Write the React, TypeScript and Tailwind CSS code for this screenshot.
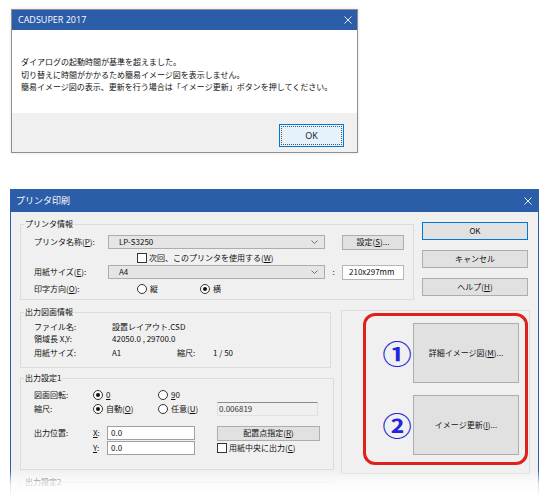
import React from "react";

const U = ({ children }: { children: React.ReactNode }) => (
  <span className="underline underline-offset-[1px]">{children}</span>
);

const Radio = ({ checked, children, className = "" }: { checked?: boolean; children: React.ReactNode; className?: string }) => (
  <span className={`flex items-center gap-[3px] ${className}`}>
    <span className="w-[10px] h-[10px] rounded-full border border-[#333] bg-white flex items-center justify-center shrink-0">
      {checked && <span className="w-[4px] h-[4px] rounded-full bg-[#111]" />}
    </span>
    <span>{children}</span>
  </span>
);

const Check = ({ children }: { children: React.ReactNode }) => (
  <span className="flex items-center gap-[2px]">
    <span className="w-[10px] h-[10px] border border-[#333] bg-white shrink-0" />
    <span>{children}</span>
  </span>
);

const Group = ({ label, className = "", children }: { label: string; className?: string; children?: React.ReactNode }) => (
  <div className={`relative border border-[#dcdcdc] ${className}`}>
    <span className="absolute -top-[7px] left-[3px] bg-[#f0f0f0] px-[1px] leading-[12px] text-[8px]">{label}</span>
    {children}
  </div>
);

const Chevron = () => (
  <svg width="7" height="4" viewBox="0 0 7 4" className="shrink-0">
    <path d="M0.5 0.5 L3.5 3.5 L6.5 0.5" fill="none" stroke="#666" strokeWidth="0.9" />
  </svg>
);

const Dropdown = ({ text }: { text: string }) => (
  <div className="w-[217px] h-[14px] bg-[#e5e5e5] border border-[#adadad] flex items-center justify-between pl-[10px] pr-[6px]">
    <span>{text}</span>
    <Chevron />
  </div>
);

const Btn = ({ children, className = "" }: { children: React.ReactNode; className?: string }) => (
  <div className={`bg-[#e1e1e1] border border-[#adadad] flex items-center justify-center ${className}`}>{children}</div>
);

const CloseX = ({ size = 8 }: { size?: number }) => (
  <svg width={size} height={size} viewBox="0 0 8 8">
    <path d="M0.5 0.5 L7.5 7.5 M7.5 0.5 L0.5 7.5" stroke="white" strokeWidth="0.9" />
  </svg>
);

export default function App() {
  return (
    <div className="w-[550px] h-[497px] bg-white relative overflow-hidden text-[#111] [font-family:'Noto_Sans_CJK_JP','Liberation_Sans',sans-serif] text-[8px] leading-[12px]">
      {/* Top message dialog */}
      <div className="ml-[11px] mt-[9px] w-[347px] h-[144px] border border-[#8f8f8f] flex flex-col shadow-[0_0_3px_rgba(0,0,0,0.12)]">
        <div className="h-[20px] bg-[#2c5da8] flex items-center justify-between pl-[6px] pr-[5px] text-white">
          <span className="text-[9px] [font-family:'Open_Sans','Liberation_Sans',sans-serif]">CADSUPER 2017</span>
          <CloseX />
        </div>
        <div className="h-[83px] bg-white pt-[26px] pl-[9px] text-[8px] leading-[12.5px]">
          <div>ダイアログの起動時間が基準を超えました。</div>
          <div>切り替えに時間がかかるため簡易イメージ図を表示しません。</div>
          <div>簡易イメージ図の表示、更新を行う場合は「イメージ更新」ボタンを押してください。</div>
        </div>
        <div className="flex-1 bg-[#f0f0f0] flex justify-end items-start pt-[11px] pr-[13px]">
          <div className="w-[65px] h-[23px] border border-[#0078d7] bg-[#e5f1fb] p-[1px]">
            <div className="w-full h-full border border-dotted border-[#555] flex items-center justify-center text-[9px] [font-family:'Open_Sans','Liberation_Sans',sans-serif]">
              OK
            </div>
          </div>
        </div>
      </div>

      {/* Print dialog */}
      <div className="ml-[10px] mt-[36px] w-[529px] h-[320px] border-x border-t border-[#2c5da8] flex flex-col">
        <div className="h-[22px] bg-[#2c5da8] flex items-center justify-between pl-[5px] pr-[6px] text-white shrink-0">
          <span className="text-[9px]">プリンタ印刷</span>
          <CloseX />
        </div>
        <div className="flex-1 bg-[#f0f0f0]">
          {/* Section A */}
          <div className="flex items-start">
            <Group label="プリンタ情報" className="ml-[9px] mt-[12px] w-[394px] h-[76px]">
              <div className="pl-[13px] pt-[10px]">
                <div className="flex items-center h-[14px]">
                  <span className="w-[74px]">プリンタ名称(<U>P</U>):</span>
                  <Dropdown text="LP-S3250" />
                  <Btn className="ml-[17px] w-[62px] h-[15px]">
                    設定(<U>S</U>)...
                  </Btn>
                </div>
                <div className="flex items-center h-[14px] mt-[2px] pl-[103px]">
                  <Check>次回、このプリンタを使用する(<U>W</U>)</Check>
                </div>
                <div className="flex items-center h-[14px]">
                  <span className="w-[74px]">用紙サイズ(<U>E</U>):</span>
                  <Dropdown text="A4" />
                  <span className="w-[17px] text-center">:</span>
                  <div className="w-[62px] h-[15px] bg-white border border-[#b5b5b5] flex items-center pl-[6px]">210x297mm</div>
                </div>
                <div className="flex items-center h-[14px] mt-[3px]">
                  <span className="w-[74px]">印字方向(<U>O</U>):</span>
                  <Radio className="ml-[29px] w-[63px]">縦</Radio>
                  <Radio checked>横</Radio>
                </div>
              </div>
            </Group>
            <div className="ml-[8px] mt-[10px] w-[106px] flex flex-col gap-[10px]">
              <div className="h-[18px] border border-[#0078d7] bg-[#e1e1e1] flex items-center justify-center">OK</div>
              <Btn className="h-[18px]">キャンセル</Btn>
              <Btn className="h-[18px]">
                ヘルプ(<U>H</U>)
              </Btn>
            </div>
          </div>

          {/* Section B */}
          <div className="flex items-start">
            <div className="ml-[9px] mt-[12px] flex flex-col">
              <Group label="出力図面情報" className="w-[311px] h-[56px]">
                <div className="pl-[13px] pt-[8px]">
                  <div className="flex items-center h-[12px]">
                    <span className="w-[78px]">ファイル名:</span>
                    <span>設置レイアウト.CSD</span>
                  </div>
                  <div className="flex items-center h-[12px]">
                    <span className="w-[78px]">領域長 X,Y:</span>
                    <span>42050.0 , 29700.0</span>
                  </div>
                  <div className="flex items-center h-[12px] mt-[2px]">
                    <span className="w-[78px]">用紙サイズ:</span>
                    <span className="w-[65px]">A1</span>
                    <span className="w-[36px]">縮尺:</span>
                    <span>1 / 50</span>
                  </div>
                </div>
              </Group>
              <Group label="出力設定1" className="mt-[10px] w-[314px] h-[92px]">
                <div className="pl-[13px] pt-[9px]">
                  <div className="flex items-center h-[14px]">
                    <span className="w-[59px]">図面回転:</span>
                    <Radio checked className="w-[65px]">
                      <U>0</U>
                    </Radio>
                    <Radio>
                      <U>9</U>0
                    </Radio>
                  </div>
                  <div className="flex items-center h-[14px]">
                    <span className="w-[59px]">縮尺:</span>
                    <Radio checked className="w-[65px]">
                      自動(<U>O</U>)
                    </Radio>
                    <Radio className="w-[59px]">
                      任意(<U>U</U>)
                    </Radio>
                    <div className="w-[101px] h-[14px] border-t border-t-[#8a8a8a] border-x border-b border-[#e2e2e2] flex items-center pl-[1px] text-[#333]">
                      0.006819
                    </div>
                  </div>
                  <div className="flex items-center h-[14px] mt-[10px]">
                    <span className="w-[59px]">出力位置:</span>
                    <span className="w-[14px]">
                      <U>X</U>:
                    </span>
                    <div className="w-[88px] h-[14px] bg-white border border-[#a0a0a0] flex items-center pl-[3px]">0.0</div>
                    <Btn className="ml-[22px] w-[103px] h-[15px]">
                      配置点指定(<U>R</U>)
                    </Btn>
                  </div>
                  <div className="flex items-center h-[14px] mt-[1px]">
                    <span className="w-[59px]" />
                    <span className="w-[14px]">
                      <U>Y</U>:
                    </span>
                    <div className="w-[88px] h-[14px] bg-white border border-[#a0a0a0] flex items-center pl-[3px]">0.0</div>
                    <span className="ml-[22px]">
                      <Check>
                        用紙中央に出力(<U>C</U>)
                      </Check>
                    </span>
                  </div>
                </div>
              </Group>
              <Group label="出力設定2" className="mt-[12px] w-[314px] h-[40px]" />
            </div>
            <div className="ml-[7px] mt-[10px] w-[189px] h-[164px] border border-[#dcdcdc]">
              <div className="ml-[21px] mt-[2px] w-[165px] h-[152px] border-[3px] border-[#e0201c] rounded-[12px] flex flex-col pt-[7px] gap-[12px]">
                <div className="flex items-center h-[60px]">
                  <span className="ml-[17px] w-[28px] text-center text-[26px] leading-none font-bold text-[#2424dc] scale-x-[1.12]">①</span>
                  <Btn className="ml-[2px] w-[106px] h-[60px]">
                    詳細イメージ図(<U>M</U>)...
                  </Btn>
                </div>
                <div className="flex items-center h-[60px]">
                  <span className="ml-[17px] w-[28px] text-center text-[26px] leading-none font-bold text-[#2424dc] scale-x-[1.12]">②</span>
                  <Btn className="ml-[2px] w-[106px] h-[60px]">
                    イメージ更新(<U>I</U>)...
                  </Btn>
                </div>
              </div>
            </div>
          </div>
        </div>
      </div>

      {/* bottom fade */}
      <div className="absolute left-0 right-0 top-[470px] h-[27px] bg-gradient-to-b from-white/0 via-white/80 to-white" />
    </div>
  );
}
